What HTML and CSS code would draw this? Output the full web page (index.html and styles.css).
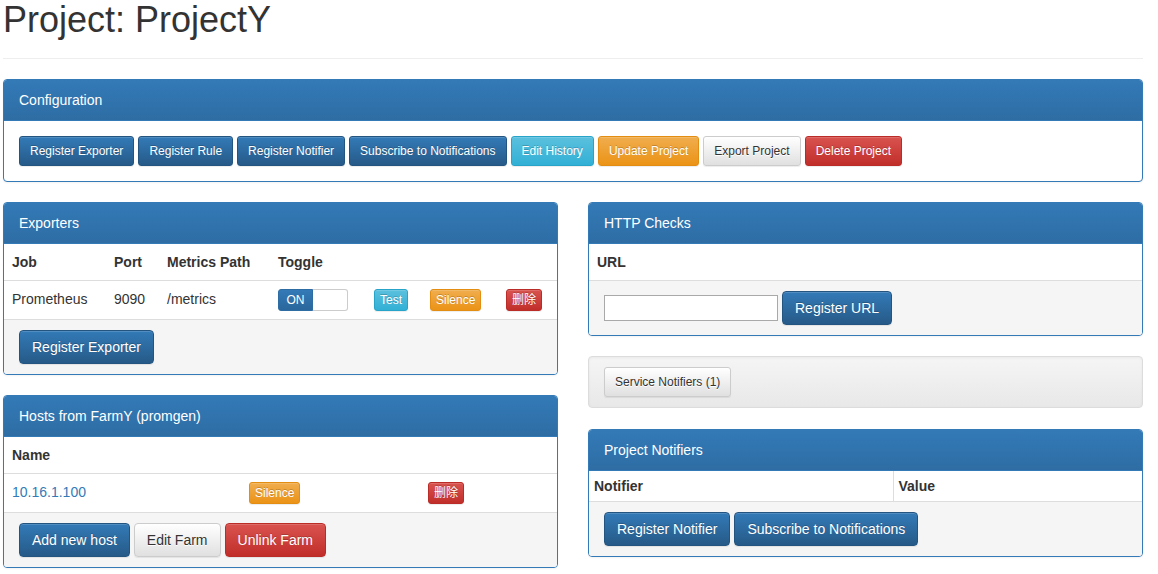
FILE: index.html
```html
<!DOCTYPE html>
<html lang="en">
<head>
<meta charset="utf-8">
<title>Project: ProjectY</title>
<link rel="stylesheet" href="styles.css">
</head>
<body>
<div class="page">
  <header class="page-header"><h1>Project: ProjectY</h1></header>

  <section class="panel">
    <div class="panel-heading">Configuration</div>
    <div class="panel-body btn-row">
      <a class="btn btn-sm btn-primary">Register Exporter</a>
      <a class="btn btn-sm btn-primary">Register Rule</a>
      <a class="btn btn-sm btn-primary">Register Notifier</a>
      <a class="btn btn-sm btn-primary">Subscribe to Notifications</a>
      <a class="btn btn-sm btn-info">Edit History</a>
      <a class="btn btn-sm btn-warning">Update Project</a>
      <a class="btn btn-sm btn-default">Export Project</a>
      <a class="btn btn-sm btn-danger">Delete Project</a>
    </div>
  </section>

  <div class="cols">
    <div class="col">
      <section class="panel">
        <div class="panel-heading">Exporters</div>
        <table class="table">
          <colgroup>
            <col class="w-102"><col class="w-53"><col class="w-111"><col class="w-96"><col class="w-56"><col class="w-76"><col>
          </colgroup>
          <thead>
            <tr><th>Job</th><th>Port</th><th>Metrics Path</th><th>Toggle</th><th></th><th></th><th></th></tr>
          </thead>
          <tbody>
            <tr>
              <td>Prometheus</td>
              <td>9090</td>
              <td>/metrics</td>
              <td><span class="toggle"><span class="toggle-on">ON</span><span class="toggle-handle"></span></span></td>
              <td><a class="btn btn-xs btn-info">Test</a></td>
              <td><a class="btn btn-xs btn-warning">Silence</a></td>
              <td><a class="btn btn-xs btn-danger">删除</a></td>
            </tr>
          </tbody>
        </table>
        <div class="panel-footer btn-row">
          <a class="btn btn-primary">Register Exporter</a>
        </div>
      </section>

      <section class="panel">
        <div class="panel-heading">Hosts from FarmY (promgen)</div>
        <table class="table">
          <colgroup>
            <col class="w-237"><col class="w-179"><col>
          </colgroup>
          <thead>
            <tr><th>Name</th><th></th><th></th></tr>
          </thead>
          <tbody>
            <tr>
              <td><a class="link">10.16.1.100</a></td>
              <td><a class="btn btn-xs btn-warning">Silence</a></td>
              <td><a class="btn btn-xs btn-danger">删除</a></td>
            </tr>
          </tbody>
        </table>
        <div class="panel-footer btn-row">
          <a class="btn btn-primary">Add new host</a>
          <a class="btn btn-default">Edit Farm</a>
          <a class="btn btn-danger">Unlink Farm</a>
        </div>
      </section>
    </div>

    <div class="col">
      <section class="panel">
        <div class="panel-heading">HTTP Checks</div>
        <table class="table">
          <thead><tr><th>URL</th></tr></thead>
        </table>
        <div class="panel-footer form-row">
          <input class="url-input" type="text">
          <a class="btn btn-primary">Register URL</a>
        </div>
      </section>

      <div class="well">
        <a class="btn btn-sm btn-default">Service Notifiers (1)</a>
      </div>

      <section class="panel">
        <div class="panel-heading">Project Notifiers</div>
        <table class="table table-condensed table-bordered">
          <colgroup><col class="w-304"><col></colgroup>
          <thead><tr><th>Notifier</th><th>Value</th></tr></thead>
        </table>
        <div class="panel-footer btn-row">
          <a class="btn btn-primary">Register Notifier</a>
          <a class="btn btn-primary">Subscribe to Notifications</a>
        </div>
      </section>
    </div>
  </div>
</div>
</body>
</html>
```

FILE: styles.css
```css
* { box-sizing: border-box; }

html, body {
  margin: 0;
  padding: 0;
  background: #fff;
}

body {
  font-family: "Liberation Sans", Arial, "Noto Sans CJK SC", sans-serif;
  font-size: 14px;
  line-height: 20px;
  color: #333;
}

.page {
  width: 1140px;
  margin-left: 3px;
}

.page-header {
  padding-bottom: 18px;
  margin-bottom: 20px;
  border-bottom: 1px solid #eee;
}

.page-header h1 {
  margin: 0;
  font-size: 36px;
  line-height: 40px;
  font-weight: 500;
  color: #333;
}

/* panels */
.panel {
  background: #fff;
  border: 1px solid #337ab7;
  border-radius: 4px;
  margin-bottom: 20px;
  box-shadow: 0 1px 2px rgba(0, 0, 0, .05);
  overflow: hidden;
}

.panel-heading {
  padding: 10px 15px;
  color: #fff;
  background: linear-gradient(to bottom, #337ab7 0, #2e6da4 100%);
  border-bottom: 1px solid #337ab7;
}

.panel-body {
  padding: 15px;
}

.panel-footer {
  padding: 10px 15px;
  background: #f5f5f5;
  border-top: 1px solid #ddd;
}

.btn-row {
  display: flex;
  flex-wrap: wrap;
  gap: 4px;
}

.form-row {
  display: flex;
  align-items: center;
  gap: 4px;
}

.cols {
  display: grid;
  grid-template-columns: 555px 555px;
  column-gap: 30px;
}

/* tables */
.table {
  width: 100%;
  border-collapse: collapse;
  table-layout: fixed;
}

.table th,
.table td {
  padding: 8px;
  line-height: 20px;
  text-align: left;
  vertical-align: top;
  white-space: nowrap;
}

.table th {
  font-weight: bold;
}

.table tbody tr td {
  border-top: 1px solid #ddd;
}

.table-condensed th,
.table-condensed td {
  padding: 5px;
}

.table-bordered th + th,
.table-bordered td + td {
  border-left: 1px solid #ddd;
}

.w-102 { width: 102px; }
.w-53 { width: 53px; }
.w-111 { width: 111px; }
.w-96 { width: 96px; }
.w-56 { width: 56px; }
.w-76 { width: 76px; }
.w-237 { width: 237px; }
.w-179 { width: 179px; }
.w-304 { width: 304px; }

.link {
  color: #337ab7;
  text-decoration: none;
}

/* buttons */
.btn {
  display: inline-block;
  padding: 6px 12px;
  font-size: 14px;
  line-height: 20px;
  border: 1px solid transparent;
  border-radius: 4px;
  color: #fff;
  text-decoration: none;
  white-space: nowrap;
  vertical-align: top;
  cursor: pointer;
  box-shadow: inset 0 1px 0 rgba(255, 255, 255, .15), 0 1px 1px rgba(0, 0, 0, .075);
  text-shadow: 0 -1px 0 rgba(0, 0, 0, .2);
}

.btn-sm {
  padding: 5px 10px;
  font-size: 12px;
  line-height: 18px;
  border-radius: 3px;
}

.btn-xs {
  padding: 1px 5px;
  font-size: 12px;
  line-height: 18px;
  border-radius: 3px;
}

.btn-primary {
  background: linear-gradient(to bottom, #337ab7 0, #265a88 100%);
  border-color: #245580;
}

.btn-info {
  background: linear-gradient(to bottom, #5bc0de 0, #31b0d5 100%);
  border-color: #28a4c9;
}

.btn-warning {
  background: linear-gradient(to bottom, #f0ad4e 0, #eb9316 100%);
  border-color: #e38d13;
}

.btn-danger {
  background: linear-gradient(to bottom, #d9534f 0, #c12e2a 100%);
  border-color: #b92c28;
}

.btn-default {
  color: #333;
  background: linear-gradient(to bottom, #fff 0, #e0e0e0 100%);
  border-color: #ccc;
  text-shadow: 0 1px 0 #fff;
}

/* toggle */
.toggle {
  display: inline-flex;
  width: 70px;
  height: 22px;
  vertical-align: top;
}

.toggle-on {
  width: 35px;
  height: 22px;
  color: #fff;
  font-size: 12px;
  line-height: 20px;
  text-align: center;
  background: linear-gradient(to bottom, #337ab7 0, #2a679c 100%);
  border: 1px solid #2e6da4;
  border-radius: 3px 0 0 3px;
}

.toggle-handle {
  flex: 1;
  height: 22px;
  background: #fff;
  border: 1px solid #ccc;
  border-left: 0;
  border-radius: 0 3px 3px 0;
}

/* form */
.url-input {
  width: 174px;
  height: 26px;
  margin: 0;
  padding: 2px 4px;
  border: 1px solid #a9a9a9;
  background: #fff;
  font: 14px "Liberation Sans", Arial, sans-serif;
}

/* well */
.well {
  padding: 10px 15px;
  margin-bottom: 21px;
  background: linear-gradient(to bottom, #f5f5f5 0, #e8e8e8 100%);
  border: 1px solid #dcdcdc;
  border-radius: 4px;
  box-shadow: inset 0 1px 3px rgba(0, 0, 0, .05), 0 1px 0 rgba(255, 255, 255, .1);
}
```
